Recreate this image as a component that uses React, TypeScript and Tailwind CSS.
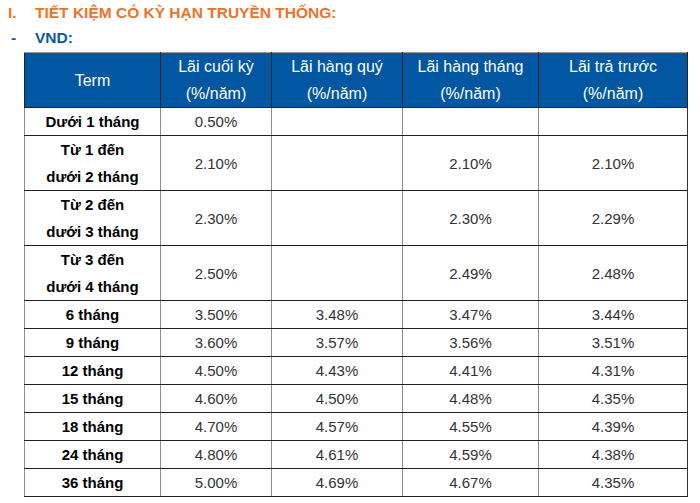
import React from "react";

type Row = { term: string[]; v: string[] };

const rows: Row[] = [
  { term: ["Dưới 1 tháng"], v: ["0.50%", "", "", ""] },
  { term: ["Từ 1 đến", "dưới 2 tháng"], v: ["2.10%", "", "2.10%", "2.10%"] },
  { term: ["Từ 2 đến", "dưới 3 tháng"], v: ["2.30%", "", "2.30%", "2.29%"] },
  { term: ["Từ 3 đến", "dưới 4 tháng"], v: ["2.50%", "", "2.49%", "2.48%"] },
  { term: ["6 tháng"], v: ["3.50%", "3.48%", "3.47%", "3.44%"] },
  { term: ["9 tháng"], v: ["3.60%", "3.57%", "3.56%", "3.51%"] },
  { term: ["12 tháng"], v: ["4.50%", "4.43%", "4.41%", "4.31%"] },
  { term: ["15 tháng"], v: ["4.60%", "4.50%", "4.48%", "4.35%"] },
  { term: ["18 tháng"], v: ["4.70%", "4.57%", "4.55%", "4.39%"] },
  { term: ["24 tháng"], v: ["4.80%", "4.61%", "4.59%", "4.38%"] },
  { term: ["36 tháng"], v: ["5.00%", "4.69%", "4.67%", "4.35%"] },
];

const heads = [
  ["Lãi cuối kỳ", "(%/năm)"],
  ["Lãi hàng quý", "(%/năm)"],
  ["Lãi hàng tháng", "(%/năm)"],
  ["Lãi trả trước", "(%/năm)"],
];

const App: React.FC = () => {
  return (
    <div
      className="w-[700px] h-[503px] bg-white overflow-hidden"
      style={{ fontFamily: '"Liberation Sans", Arial, sans-serif' }}
    >
      <div className="flex items-center h-[24px] pt-[1px] text-[15.5px] font-bold text-[#f07226]">
        <span className="w-[35px] pl-[8px]">I.</span>
        <span>TIẾT KIỆM CÓ KỲ HẠN TRUYỀN THỐNG:</span>
      </div>
      <div className="flex items-center h-[28px] text-[15.5px] font-bold text-[#0a58a2]">
        <span className="w-[35px] pl-[11px]">-</span>
        <span>VND:</span>
      </div>
      <table className="ml-[24px] w-[663px] border-collapse table-fixed text-[15px] leading-[27px]">
        <colgroup>
          <col className="w-[136px]" />
          <col className="w-[111px]" />
          <col className="w-[131px]" />
          <col className="w-[136px]" />
          <col className="w-[149px]" />
        </colgroup>
        <thead>
          <tr className="h-[55px] bg-[#0157a1] text-white text-[16px]">
            <th className="border border-[#222] border-t-[#999] font-normal text-center">
              Term
            </th>
            {heads.map((h, i) => (
              <th key={i} className="border border-[#222] border-t-[#999] font-normal text-center">
                <div>{h[0]}</div>
                <div>{h[1]}</div>
              </th>
            ))}
          </tr>
        </thead>
        <tbody>
          {rows.map((r, i) => (
            <tr key={i} className={r.term.length > 1 ? "h-[55px]" : "h-[28px]"}>
              <td className="border-y border-y-[#222] border-x border-x-[#8c8c8c] text-center font-bold text-black p-0">
                {r.term.map((t, j) => (
                  <div key={j}>{t}</div>
                ))}
              </td>
              {r.v.map((v, j) => (
                <td
                  key={j}
                  className={
                    j === 3
                      ? "border-y border-y-[#222] border-l border-l-[#8c8c8c] border-r border-r-[#333] text-center text-[#333] p-0"
                      : "border-y border-y-[#222] border-x border-x-[#8c8c8c] text-center text-[#333] p-0"
                  }
                >
                  {v}
                </td>
              ))}
            </tr>
          ))}
        </tbody>
      </table>
    </div>
  );
};

export default App;
